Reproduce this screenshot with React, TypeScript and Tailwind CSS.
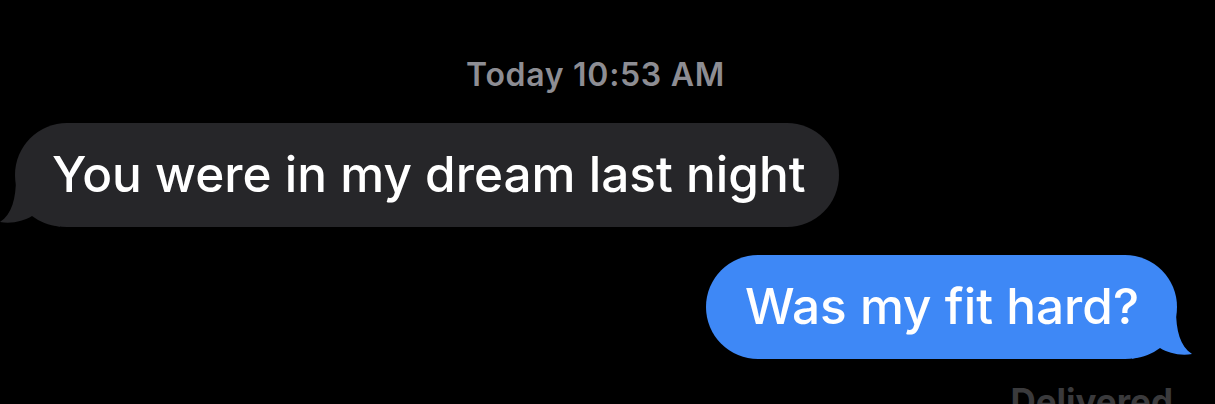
import React from 'react';

type Side = 'in' | 'out';

// iOS-style bubble tail, drawn in the bubble's colour over its bottom corner
function Tail({ side, color }: { side: Side; color: string }) {
  return (
    <svg
      width="60"
      height="50"
      viewBox="0 0 60 50"
      className={
        side === 'in'
          ? 'absolute -left-[15px] bottom-0'
          : 'absolute -right-[15px] bottom-0 -scale-x-100'
      }
    >
      <path
        d="M16 0 C16 22 12 37 0 45 C12 47 24 44 32 39 C40 45 48 48 60 49.8 L60 0 Z"
        fill={color}
      />
    </svg>
  );
}

function Bubble({ side, text }: { side: Side; text: string }) {
  const incoming = side === 'in';
  return (
    <div
      className={
        incoming
          ? 'relative flex h-[104px] items-center rounded-[52px] bg-[#262629] pl-[37px] pr-[33px]'
          : 'relative flex h-[104px] items-center rounded-[52px] bg-[#3e88f6] pl-[39px] pr-[38px]'
      }
    >
      <span className="text-[49.5px] font-medium leading-none text-white">{text}</span>
      <Tail side={side} color={incoming ? '#262629' : '#3e88f6'} />
    </div>
  );
}

export default function App() {
  return (
    <div
      className="h-[404px] w-full overflow-hidden bg-black"
      style={{ fontFamily: 'Inter, "Noto Sans", sans-serif' }}
    >
      <div className="pt-[56px] pr-[24px] text-center text-[32px] font-semibold leading-[38px] tracking-[0.7px] text-[#8d8d93]">
        Today 10:53 AM
      </div>

      <div className="mt-[29px] flex pl-[15px]">
        <Bubble side="in" text="You were in my dream last night" />
      </div>

      <div className="mt-[28px] flex justify-end pr-[38px]">
        <Bubble side="out" text="Was my fit hard?" />
      </div>

      <div className="mt-[22px] flex justify-end pr-[42px] text-[35px] font-bold leading-[40px] text-[#3a3a3c]">
        Delivered
      </div>
    </div>
  );
}
